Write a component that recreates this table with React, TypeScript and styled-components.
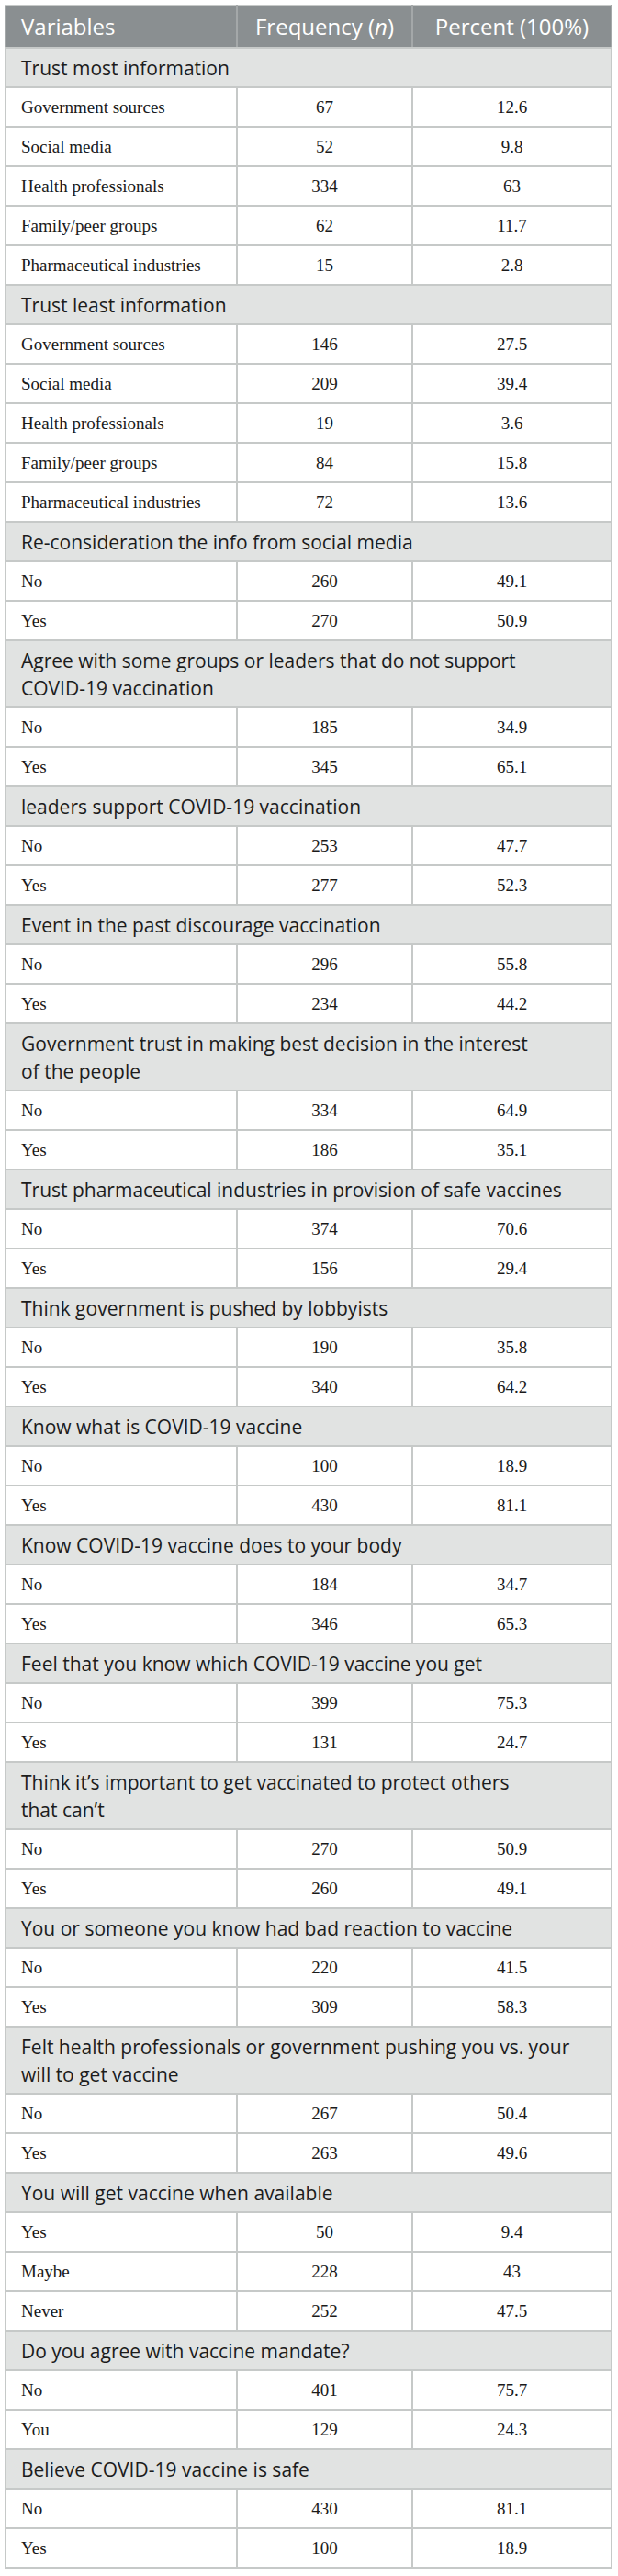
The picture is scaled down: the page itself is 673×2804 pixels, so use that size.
import { FC, Fragment } from "react"
import styled, { createGlobalStyle } from "styled-components"

type Row = [string, number, string]

type Section = {
	title: string
	rows: Row[]
}

const sections: Section[] = [
	{
		title: "Trust most information",
		rows: [
			["Government sources", 67, "12.6"],
			["Social media", 52, "9.8"],
			["Health professionals", 334, "63"],
			["Family/peer groups", 62, "11.7"],
			["Pharmaceutical industries", 15, "2.8"],
		],
	},
	{
		title: "Trust least information",
		rows: [
			["Government sources", 146, "27.5"],
			["Social media", 209, "39.4"],
			["Health professionals", 19, "3.6"],
			["Family/peer groups", 84, "15.8"],
			["Pharmaceutical industries", 72, "13.6"],
		],
	},
	{
		title: "Re-consideration the info from social media",
		rows: [
			["No", 260, "49.1"],
			["Yes", 270, "50.9"],
		],
	},
	{
		title:
			"Agree with some groups or leaders that do not support\nCOVID-19 vaccination",
		rows: [
			["No", 185, "34.9"],
			["Yes", 345, "65.1"],
		],
	},
	{
		title: "leaders support COVID-19 vaccination",
		rows: [
			["No", 253, "47.7"],
			["Yes", 277, "52.3"],
		],
	},
	{
		title: "Event in the past discourage vaccination",
		rows: [
			["No", 296, "55.8"],
			["Yes", 234, "44.2"],
		],
	},
	{
		title:
			"Government trust in making best decision in the interest\nof the people",
		rows: [
			["No", 334, "64.9"],
			["Yes", 186, "35.1"],
		],
	},
	{
		title: "Trust pharmaceutical industries in provision of safe vaccines",
		rows: [
			["No", 374, "70.6"],
			["Yes", 156, "29.4"],
		],
	},
	{
		title: "Think government is pushed by lobbyists",
		rows: [
			["No", 190, "35.8"],
			["Yes", 340, "64.2"],
		],
	},
	{
		title: "Know what is COVID-19 vaccine",
		rows: [
			["No", 100, "18.9"],
			["Yes", 430, "81.1"],
		],
	},
	{
		title: "Know COVID-19 vaccine does to your body",
		rows: [
			["No", 184, "34.7"],
			["Yes", 346, "65.3"],
		],
	},
	{
		title: "Feel that you know which COVID-19 vaccine you get",
		rows: [
			["No", 399, "75.3"],
			["Yes", 131, "24.7"],
		],
	},
	{
		title:
			"Think it\u2019s important to get vaccinated to protect others\nthat can\u2019t",
		rows: [
			["No", 270, "50.9"],
			["Yes", 260, "49.1"],
		],
	},
	{
		title: "You or someone you know had bad reaction to vaccine",
		rows: [
			["No", 220, "41.5"],
			["Yes", 309, "58.3"],
		],
	},
	{
		title:
			"Felt health professionals or government pushing you vs. your\nwill to get vaccine",
		rows: [
			["No", 267, "50.4"],
			["Yes", 263, "49.6"],
		],
	},
	{
		title: "You will get vaccine when available",
		rows: [
			["Yes", 50, "9.4"],
			["Maybe", 228, "43"],
			["Never", 252, "47.5"],
		],
	},
	{
		title: "Do you agree with vaccine mandate?",
		rows: [
			["No", 401, "75.7"],
			["You", 129, "24.3"],
		],
	},
	{
		title: "Believe COVID-19 vaccine is safe",
		rows: [
			["No", 430, "81.1"],
			["Yes", 100, "18.9"],
		],
	},
]

const App: FC = () => {
	return (
		<Page>
			<GlobalStyle />
			<Table>
				<colgroup>
					<col style={{ width: 252 }} />
					<col style={{ width: 191 }} />
					<col />
				</colgroup>
				<thead>
					<tr>
						<HeadCell>Variables</HeadCell>
						<HeadCell center>
							Frequency (<i>n</i>)
						</HeadCell>
						<HeadCell center>Percent (100%)</HeadCell>
					</tr>
				</thead>
				<tbody>
					{sections.map(section => (
						<Fragment key={section.title}>
							<tr>
								<SectionCell colSpan={3}>{section.title}</SectionCell>
							</tr>
							{section.rows.map(([label, freq, pct]) => (
								<tr key={label}>
									<Cell>{label}</Cell>
									<Cell center>{freq}</Cell>
									<Cell center>{pct}</Cell>
								</tr>
							))}
						</Fragment>
					))}
				</tbody>
			</Table>
		</Page>
	)
}

const GlobalStyle = createGlobalStyle`
	body {
		margin: 0;
		background: #ffffff;
	}
`

const Page = styled.div`
	padding: 5px 6px 7px 5px;
`

const Table = styled.table`
	width: 662px;
	border-collapse: collapse;
	table-layout: fixed;
	border: 2px solid #c6c9c8;
`

const HeadCell = styled.th<{ center?: boolean }>`
	background: #8a8f91;
	color: #ffffff;
	font-family: "Open Sans", "Liberation Sans", sans-serif;
	font-weight: 400;
	font-size: 24px;
	line-height: 30px;
	padding: 7px 16px;
	text-align: ${props => (props.center ? "center" : "left")};
	border: 2px solid #a4a8a9;
	border-top-color: #c6c9c8;
	border-bottom-color: #c6c9c8;

	i {
		font-style: italic;
	}
`

const SectionCell = styled.td`
	background: #e1e3e2;
	color: #1c1c1c;
	font-family: "Open Sans", "Liberation Sans", sans-serif;
	font-size: 21px;
	line-height: 30px;
	padding: 5.5px 16px;
	white-space: pre-line;
	border: 2px solid #c6c9c8;
`

const Cell = styled.td<{ center?: boolean }>`
	color: #1a1a1a;
	font-family: "Liberation Serif", "Times New Roman", serif;
	font-size: 19px;
	line-height: 25px;
	padding: 8px 16px;
	text-align: ${props => (props.center ? "center" : "left")};
	border: 2px solid #c6c9c8;
`

export default App
